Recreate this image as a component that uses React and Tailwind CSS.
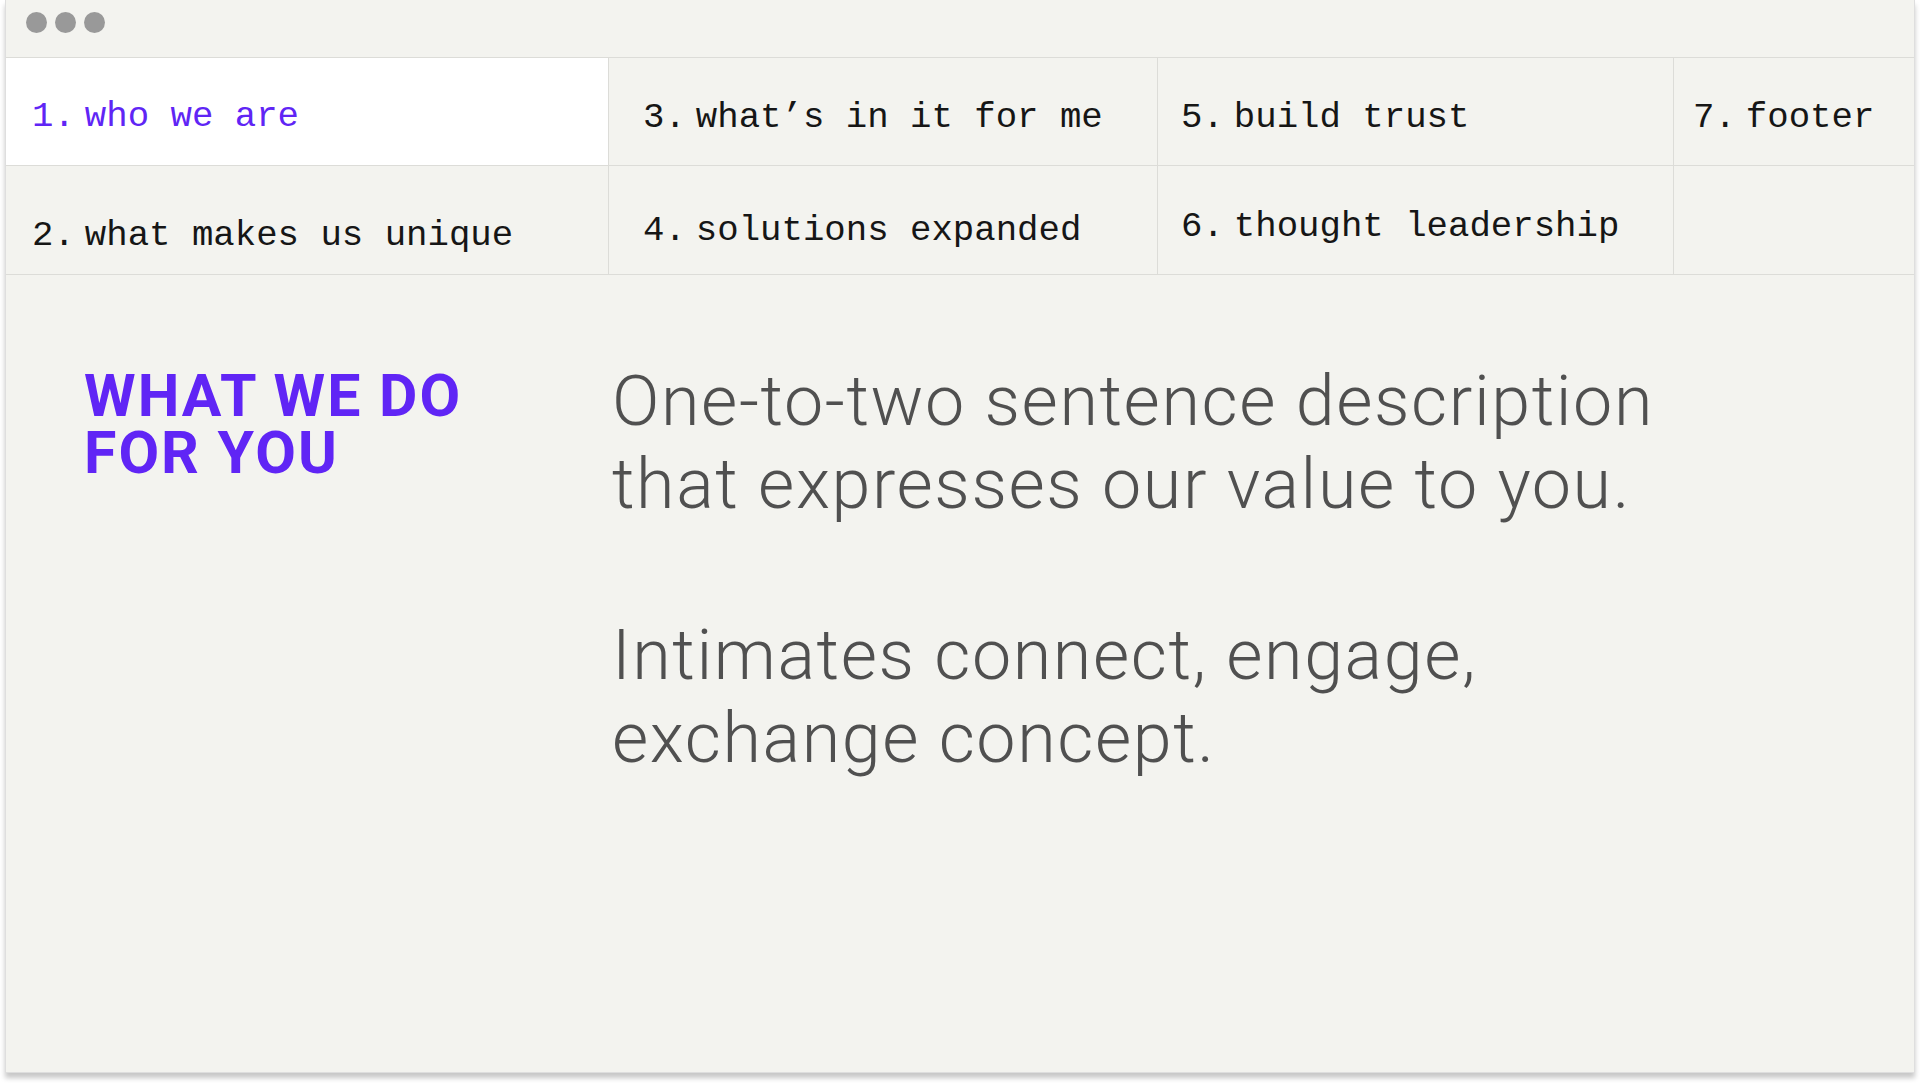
import clsx from 'clsx';

const mono = { fontFamily: '"Liberation Mono", "DejaVu Sans Mono", monospace' };

const NavCell = ({ num, label, active, className }) => (
  <div
    className={clsx(
      'border-r border-b border-[#dcdcd8] text-[35.7px] leading-[35px] whitespace-nowrap',
      active ? 'bg-white text-[#6025f5]' : 'text-[#161616]',
      className
    )}
    style={mono}
  >
    {num && <span className="mr-[10px]">{num}</span>}
    {label}
  </div>
);

export default function App() {
  return (
    <div className="min-h-screen bg-white px-[5px]">
      <div className="h-[1073px] bg-[#f3f3ef] border-x border-b border-[#dedede] shadow-[0_5px_5px_rgba(0,0,0,0.22)] flex flex-col">
        {/* title bar */}
        <div className="h-[58px] border-b border-[#dcdcd8] flex items-center gap-[8px] pl-[20px] pb-[12px]">
          <span className="w-[21px] h-[21px] rounded-full bg-[#999999]" />
          <span className="w-[21px] h-[21px] rounded-full bg-[#999999]" />
          <span className="w-[21px] h-[21px] rounded-full bg-[#999999]" />
        </div>

        {/* section nav */}
        <div className="grid grid-cols-[603px_549px_516px_1fr] grid-rows-[108px_109px]">
          <NavCell num="1." label="who we are" active className="pl-[26px] pt-[41px]" />
          <NavCell num="3." label="what’s in it for me" className="pl-[34px] pt-[42px]" />
          <NavCell num="5." label="build trust" className="pl-[23px] pt-[42px]" />
          <NavCell num="7." label="footer" className="pl-[19px] pt-[42px] border-r-0" />
          <NavCell num="2." label="what makes us unique" className="pl-[26px] pt-[52px]" />
          <NavCell num="4." label="solutions expanded" className="pl-[34px] pt-[47px]" />
          <NavCell num="6." label="thought leadership" className="pl-[23px] pt-[43px]" />
          <NavCell className="border-r-0" />
        </div>

        {/* content */}
        <div className="flex pl-[78px] pt-[85px]">
          <h1
            className="w-[528px] shrink-0 mt-[7px] text-[59px] leading-[57px] font-bold text-[#6025f5] tracking-[2px]"
            style={{ fontFamily: 'Roboto, "Liberation Sans", sans-serif' }}
          >
            WHAT WE DO
            <br />
            FOR YOU
          </h1>
          <div
            className="text-[70px] leading-[83px] font-light text-[#505050] tracking-[1.6px]"
            style={{ fontFamily: 'Roboto, "Liberation Sans", sans-serif' }}
          >
            <p>
              One-to-two sentence description
              <br />
              that expresses our value to you.
            </p>
            <p className="mt-[88px]">
              Intimates connect, engage,
              <br />
              exchange concept.
            </p>
          </div>
        </div>
      </div>
    </div>
  );
}
